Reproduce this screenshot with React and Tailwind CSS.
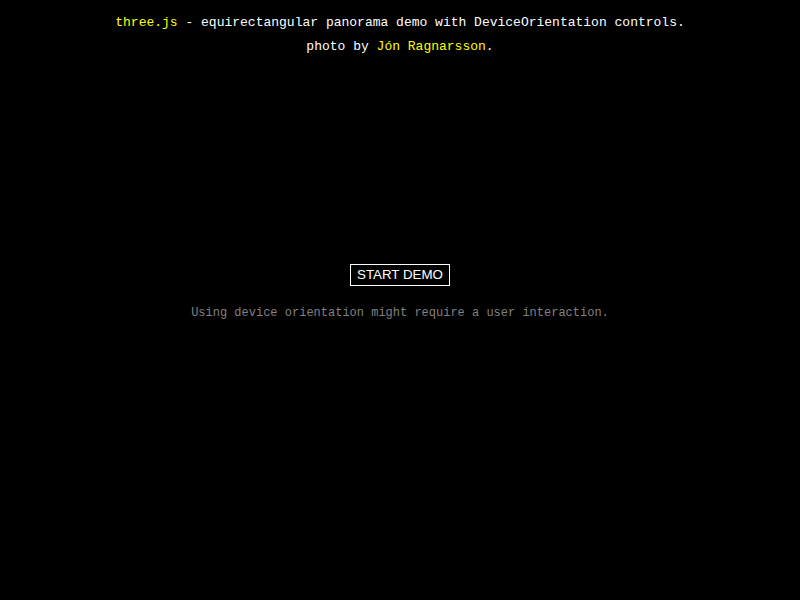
export default function App() {
  return (
    <div className="min-h-screen h-[600px] bg-black flex flex-col items-center font-['Liberation_Mono',monospace]">
      {/* Info */}
      <div className="pt-[11px] text-[13px] leading-[24px] text-white text-center">
        <div>
          <a className="text-[#ffff00]">three.js</a> - equirectangular panorama demo with DeviceOrientation controls.
        </div>
        <div>
          photo by <a className="text-[#ffff00]">Jón Ragnarsson</a>.
        </div>
      </div>

      {/* Overlay */}
      <button
        type="button"
        className="mt-[205px] w-[100px] h-[22px] border border-white bg-transparent text-white font-['Liberation_Sans',Arial,sans-serif] text-[13.33px] leading-[20px] flex items-center justify-center"
      >
        START DEMO
      </button>
      <p className="mt-[15px] text-[12px] leading-[24px] text-[#808080] text-center">
        Using device orientation might require a user interaction.
      </p>
    </div>
  );
}
